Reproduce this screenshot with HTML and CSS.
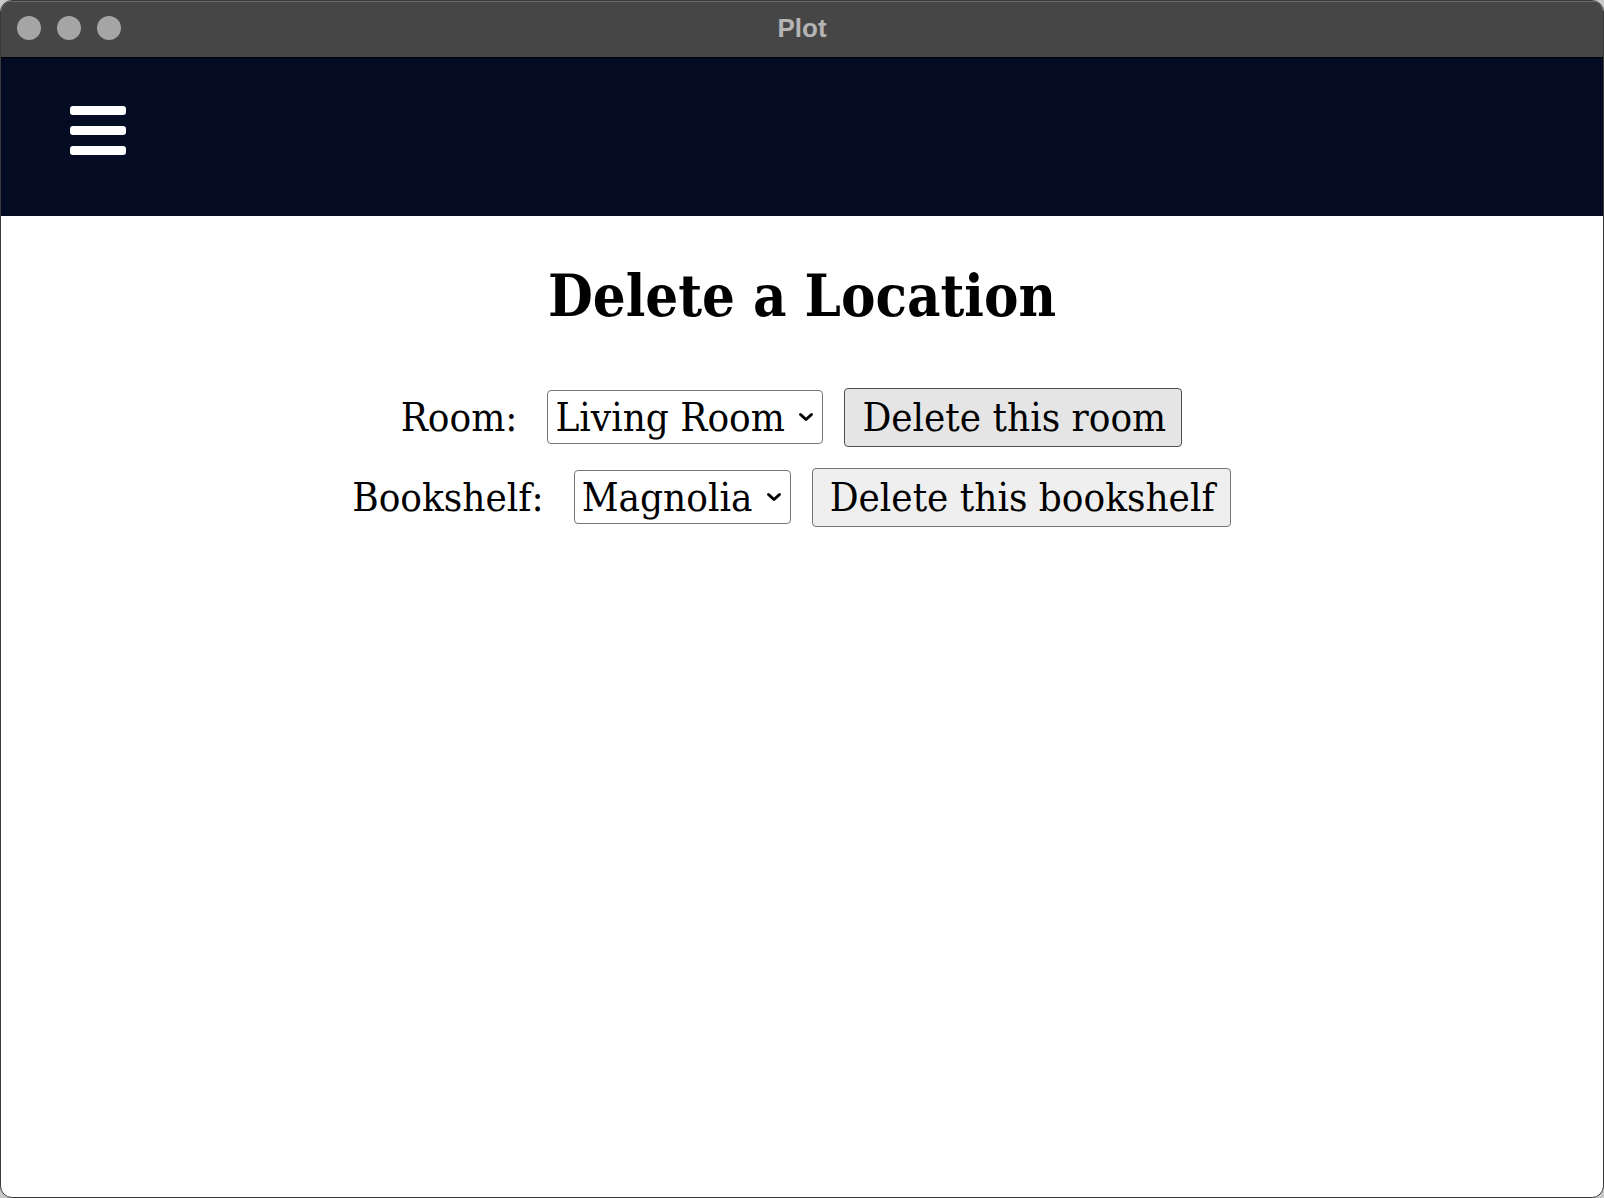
FILE: index.html
```html
<!DOCTYPE html>
<html>
<head>
<meta charset="utf-8">
<title>Plot</title>
<link rel="stylesheet" href="styles.css">
</head>
<body>
<div class="window">
  <div class="titlebar">
    <div class="lights">
      <span class="light"></span>
      <span class="light"></span>
      <span class="light"></span>
    </div>
    <div class="wintitle">Plot</div>
  </div>
  <nav class="navbar">
    <button class="burger" aria-label="Menu">
      <span class="bar"></span>
      <span class="bar"></span>
      <span class="bar"></span>
    </button>
  </nav>
  <main class="content">
    <h1 class="heading">Delete a Location</h1>
    <form class="rows">
      <div class="row">
        <label class="label" for="room">Room:</label>
        <span class="selwrap">
          <select id="room" class="select"><option>Living Room</option></select>
          <svg class="chev" width="16" height="10" viewBox="0 0 16 10"><path d="M2.5 2.5 L8 7.5 L13.5 2.5" fill="none" stroke="#000" stroke-width="3" stroke-linecap="round" stroke-linejoin="round"/></svg>
        </span>
        <button type="button" class="btn btn-hover">Delete this room</button>
      </div>
      <div class="row">
        <label class="label" for="shelf">Bookshelf:</label>
        <span class="selwrap">
          <select id="shelf" class="select"><option>Magnolia</option></select>
          <svg class="chev" width="16" height="10" viewBox="0 0 16 10"><path d="M2.5 2.5 L8 7.5 L13.5 2.5" fill="none" stroke="#000" stroke-width="3" stroke-linecap="round" stroke-linejoin="round"/></svg>
        </span>
        <button type="button" class="btn">Delete this bookshelf</button>
      </div>
    </form>
  </main>
</div>
</body>
</html>
```
FILE: styles.css
```css
html, body {
  margin: 0;
  padding: 0;
}
body {
  background: #c9c9c9;
  width: 1604px;
  height: 1198px;
  overflow: hidden;
}
.window {
  box-sizing: border-box;
  height: 1198px;
  width: 1604px;
  border: 1px solid #3a3a3a;
  border-radius: 12px;
  overflow: hidden;
  background: #ffffff;
  display: flex;
  flex-direction: column;
}
.titlebar {
  position: relative;
  box-sizing: border-box;
  height: 57px;
  flex: 0 0 57px;
  background: #464646;
  border-top: 1px solid #6c6c6c;
  border-bottom: 1px solid #000000;
  display: flex;
  align-items: center;
  justify-content: center;
}
.lights {
  position: absolute;
  left: 16px;
  top: 14px;
  display: flex;
  gap: 16px;
}
.light {
  width: 24px;
  height: 24px;
  border-radius: 50%;
  background: #a5a5a5;
}
.wintitle {
  font-family: "Liberation Sans", Arial, sans-serif;
  font-weight: bold;
  font-size: 26px;
  color: #b4b4b4;
  margin-top: -2px;
}
.navbar {
  flex: 0 0 158px;
  background: #040c24;
  padding: 48px 0 0 69px;
  box-sizing: border-box;
}
.burger {
  background: none;
  border: 0;
  padding: 0;
  display: flex;
  flex-direction: column;
  gap: 11px;
  cursor: pointer;
}
.bar {
  display: block;
  width: 56px;
  height: 9px;
  border-radius: 3px;
  background: #ffffff;
}
.content {
  font-family: "DejaVu Serif Condensed", "DejaVu Serif", serif;
  font-stretch: condensed;
  color: #000;
  display: flex;
  flex-direction: column;
  align-items: center;
}
.heading {
  font-family: "DejaVu Serif Condensed", "DejaVu Serif", serif;
  font-stretch: condensed;
  font-weight: bold;
  font-size: 57.5px;
  margin: 47px 0 0 0;
  line-height: 1.164;
}
.rows {
  margin-top: 58px;
  padding-right: 21px;
  display: flex;
  flex-direction: column;
  align-items: center;
  gap: 21px;
}
.row {
  display: flex;
  align-items: center;
}
.label {
  font-size: 40px;
  margin-right: 30px;
}
.selwrap {
  position: relative;
  display: inline-flex;
  margin-right: 21px;
}
.select {
  -webkit-appearance: none;
  appearance: none;
  font-family: inherit;
  font-stretch: condensed;
  font-size: 40px;
  color: #000;
  background: #ffffff;
  border: 1px solid #767676;
  border-radius: 4px;
  padding: 2px 37px 2px 7px;
  height: 54px;
  line-height: 1.164;
  margin: 0;
}
.chev {
  position: absolute;
  right: 9px;
  top: 22px;
  pointer-events: none;
}
.btn {
  font-family: inherit;
  font-stretch: condensed;
  font-size: 40px;
  color: #000;
  background: #efefef;
  border: 1px solid #767676;
  border-radius: 4px;
  padding: 5px 15px 5px 17px;
  height: 59px;
  line-height: 1.164;
  margin: 0;
}
.btn-hover {
  background: #e5e5e5;
  border-color: #4f4f4f;
}
```
